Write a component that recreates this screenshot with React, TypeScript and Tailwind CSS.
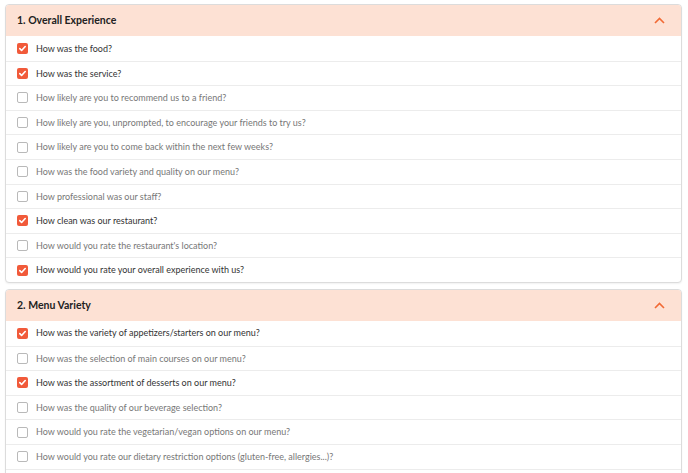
import React, { useState } from "react";

const SECTIONS = [
  {
    title: "1. Overall Experience",
    more: false,
    items: [
      { q: "How was the food?", on: true },
      { q: "How was the service?", on: true },
      { q: "How likely are you to recommend us to a friend?", on: false },
      { q: "How likely are you, unprompted, to encourage your friends to try us?", on: false },
      { q: "How likely are you to come back within the next few weeks?", on: false },
      { q: "How was the food variety and quality on our menu?", on: false },
      { q: "How professional was our staff?", on: false },
      { q: "How clean was our restaurant?", on: true },
      { q: "How would you rate the restaurant's location?", on: false },
      { q: "How would you rate your overall experience with us?", on: true },
    ],
  },
  {
    title: "2. Menu Variety",
    more: true,
    items: [
      { q: "How was the variety of appetizers/starters on our menu?", on: true },
      { q: "How was the selection of main courses on our menu?", on: false },
      { q: "How was the assortment of desserts on our menu?", on: true },
      { q: "How was the quality of our beverage selection?", on: false },
      { q: "How would you rate the vegetarian/vegan options on our menu?", on: false },
      { q: "How would you rate our dietary restriction options (gluten-free, allergies...)?", on: false },
    ],
  },
];

function Check({ on }: { on: boolean }) {
  if (on) {
    return (
      <span className="flex h-[11px] w-[11px] shrink-0 items-center justify-center rounded-[2px] bg-[#f15a3a]">
        <svg width="9" height="9" viewBox="0 0 10 10" fill="none">
          <path d="M2 5.2l2 2 4-4.4" stroke="#fff" strokeWidth="1.8" strokeLinecap="round" strokeLinejoin="round" />
        </svg>
      </span>
    );
  }
  return <span className="h-[11px] w-[11px] shrink-0 rounded-[2px] border border-[#b9b9b9] bg-white" />;
}

type Item = { q: string; on: boolean };

function Section({ title, items, more }: { title: string; items: Item[]; more: boolean }) {
  const [open, setOpen] = useState(true);
  return (
    <div className="overflow-hidden rounded-[4px] border border-[#dcdcdc] bg-white shadow-[0_1px_2px_rgba(0,0,0,0.06)]">
      <button
        type="button"
        onClick={() => setOpen(!open)}
        className="flex h-[31px] w-full items-center justify-between bg-[#fde1d4] pl-[11px] pr-[16px]"
      >
        <span className="text-[10.5px] font-bold text-[#222]">{title}</span>
        <svg width="11" height="7" viewBox="0 0 11 7" fill="none">
          <path d="M1 6l4.5-4.5L10 6" stroke="#f26a35" strokeWidth="1.6" />
        </svg>
      </button>
      {open
        ? items.map((it, i) => (
            <div
              key={i}
              className={`flex h-[24.6px] items-center gap-[8px] pl-[11px] ${i > 0 ? "border-t border-[#ececec]" : ""}`}
            >
              <Check on={it.on} />
              <span className={`text-[9px] ${it.on ? "text-[#333]" : "text-[#777]"}`}>{it.q}</span>
            </div>
          ))
        : null}
      {open && more ? <div className="h-[24px] border-t border-[#ececec]" /> : null}
    </div>
  );
}

export default function App() {
  return (
    <div
      className="h-[473px] overflow-hidden bg-white pl-[5px] pr-[6px] pt-[4px]"
      style={{ fontFamily: "Lato, 'Liberation Sans', sans-serif" }}
    >
      <div className="flex flex-col gap-[6px]">
        {SECTIONS.map((s) => (
          <Section key={s.title} title={s.title} items={s.items} more={s.more} />
        ))}
      </div>
    </div>
  );
}
